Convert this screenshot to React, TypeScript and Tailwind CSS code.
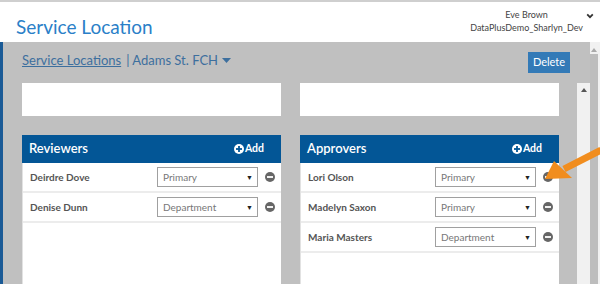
const reviewers = [
  { name: "Deirdre Dove", role: "Primary" },
  { name: "Denise Dunn", role: "Department" },
];

const approvers = [
  { name: "Lori Olson", role: "Primary" },
  { name: "Madelyn Saxon", role: "Primary" },
  { name: "Maria Masters", role: "Department" },
];

const MinusCircle = () => (
  <svg width="10" height="10" viewBox="0 0 10 10">
    <circle cx="5" cy="5" r="5" fill="#666" />
    <rect x="2" y="4.1" width="6" height="1.8" fill="#fff" />
  </svg>
);

const PlusCircle = () => (
  <svg width="10" height="10" viewBox="0 0 10 10">
    <circle cx="5" cy="5" r="5" fill="#fff" />
    <rect x="2" y="4.1" width="6" height="1.8" fill="#035696" />
    <rect x="4.1" y="2" width="1.8" height="6" fill="#035696" />
  </svg>
);

const PersonRow = ({ name, role }: { name: string; role: string }) => (
  <div className="flex items-center h-[30px] border-b-2 border-[#ececec] pl-[7px]">
    <span className="flex-1 text-[10px] font-bold text-[#555]">{name}</span>
    <div className="w-[101px] h-[20px] border border-[#a0a0a0] flex items-center justify-between pl-[5px] pr-[4px] bg-white">
      <span className="text-[10px] text-[#777]">{role}</span>
      <span className="text-[7px] text-[#222]">▼</span>
    </div>
    <div className="w-[23px] flex justify-center">
      <MinusCircle />
    </div>
  </div>
);

const Panel = ({ title, people }: { title: string; people: { name: string; role: string }[] }) => (
  <div className="flex flex-col min-h-0">
    <div className="h-[33px] shrink-0 bg-white" />
    <div className="h-[19px] shrink-0" />
    <div className="h-[28px] shrink-0 bg-[#035696] flex items-center justify-between pl-[7px] pr-[17px]">
      <span className="text-[13px] font-semibold text-white">{title}</span>
      <span className="flex items-center gap-[1px] text-[10.5px] font-bold text-white">
        <PlusCircle />
        Add
      </span>
    </div>
    <div className="bg-white flex-1 border-l border-[#e2e2e2]">
      {people.map((p) => (
        <PersonRow key={p.name} name={p.name} role={p.role} />
      ))}
    </div>
  </div>
);

export default function App() {
  return (
    <div className="w-[600px] h-[284px] overflow-hidden bg-white relative" style={{ fontFamily: "Lato, 'Open Sans', sans-serif" }}>
      <div className="h-[2px] bg-[#cfcfcf]" />
      {/* Header */}
      <div className="h-[40px] flex justify-between">
        <h1 className="pl-[16px] pt-[13px] text-[19px] leading-[24px] text-[#2a80c8]">Service Location</h1>
        <div className="flex items-start gap-[3px] pt-[6px] pr-[6px]">
          <div className="flex flex-col items-center text-[9px] leading-[13px] text-[#444]">
            <span>Eve Brown</span>
            <span>DataPlusDemo_Sharlyn_Dev</span>
          </div>
          <svg width="8" height="8" viewBox="0 0 10 10" className="mt-[4px]">
            <path d="M1.5 3 L5 6.5 L8.5 3" stroke="#333" strokeWidth="2.2" fill="none" />
          </svg>
        </div>
      </div>

      {/* Body */}
      <div className="flex h-[242px]">
        <div className="w-[590px] bg-[#c0c0c0] border-l-[3px] border-[#1a5a96] flex flex-col">
          <div className="h-[41px] shrink-0 flex items-start justify-between pl-[19px] pr-[20px]">
            <div className="flex items-center pt-[9px] text-[13px] text-[#3d6f9e]">
              <span className="underline">Service Locations</span>
              <span className="ml-[5px]">| Adams St. FCH</span>
              <svg width="9" height="6" viewBox="0 0 9 6" className="ml-[4px]">
                <path d="M0 0 L9 0 L4.5 5 Z" fill="#3d6f9e" />
              </svg>
            </div>
            <button className="mt-[10px] w-[42px] h-[21px] bg-[#337ab7] text-white text-[11px]">Delete</button>
          </div>
          <div className="flex flex-1 min-h-0">
            <div className="flex-1 grid grid-cols-[259px_259px] gap-[19px] pl-[19px]">
              <Panel title="Reviewers" people={reviewers} />
              <Panel title="Approvers" people={approvers} />
            </div>
            <div className="w-[13px] bg-[#f1f1f1] flex justify-center pt-[5px]">
              <svg width="6" height="4" viewBox="0 0 6 4">
                <path d="M0 4 L3 0 L6 4 Z" fill="#555" />
              </svg>
            </div>
          </div>
        </div>
        <div className="w-[10px] bg-[#f1f1f1] flex flex-col">
          <div className="w-[8px] h-[12px] flex justify-center items-end pb-[2px]">
            <svg width="6" height="4" viewBox="0 0 6 4">
              <path d="M0 4 L3 0 L6 4 Z" fill="#aaa" />
            </svg>
          </div>
          <div className="w-[8px] flex-1 bg-[#bdbdbd]" />
        </div>
      </div>

      {/* Orange annotation arrow */}
      <svg className="absolute left-[540px] top-[145px]" width="60" height="40" viewBox="0 0 60 40">
        <path d="M61 5 L24 24" stroke="#f18d1e" strokeWidth="7" fill="none" />
        <path d="M5 34 L14 16 L32 33 Z" fill="#f18d1e" />
      </svg>
    </div>
  );
}
